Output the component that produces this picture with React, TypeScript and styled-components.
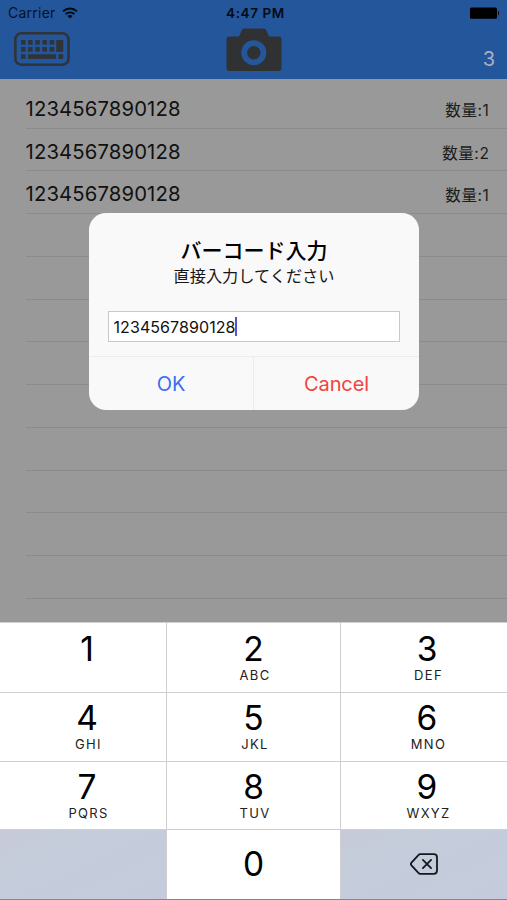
import React from "react";
import styled, { createGlobalStyle } from "styled-components";

const GlobalStyle = createGlobalStyle`
  *, *::before, *::after { box-sizing: border-box; }
  body {
    margin: 0;
    font-family: Inter, "Noto Sans CJK JP", sans-serif;
    color: #000;
  }
  button { font: inherit; border: 0; padding: 0; background: none; }
`;

const Screen = styled.div`
  position: relative;
  width: 507px;
  height: 900px;
  overflow: hidden;
  display: flex;
  flex-direction: column;
  background: #999;
`;

const Header = styled.header`
  flex: none;
  height: 79.4px;
  background: #24569b;
`;

const StatusBar = styled.div`
  display: grid;
  grid-template-columns: 1fr auto 1fr;
  align-items: center;
  height: 26px;
  padding: 0 7px 0 8px;
`;

const Carrier = styled.div`
  display: flex;
  align-items: center;
  gap: 6px;
  font-size: 14px;
  line-height: 20px;
  letter-spacing: 0.25px;
  color: #061226;
`;

const Clock = styled.div`
  font-size: 13.5px;
  font-weight: 600;
  line-height: 20px;
  letter-spacing: 0.6px;
  padding-left: 3px;
  color: #030a14;
`;

const Battery = styled.svg`
  justify-self: end;
`;

const Toolbar = styled.nav`
  display: grid;
  grid-template-columns: 1fr auto 1fr;
  height: 53px;
  padding: 0 12px 0 14px;
`;

const KeyboardButton = styled.button`
  justify-self: start;
  align-self: start;
  display: flex;
  padding-top: 6px;
`;

const CameraButton = styled.button`
  align-self: start;
  display: flex;
  padding-top: 2px;
  margin-left: -2px;
`;

const ItemCount = styled.span`
  justify-self: end;
  padding-top: 19px;
  font-size: 20px;
  line-height: 28px;
  color: #a7b2c4;
`;

const List = styled.ul`
  list-style: none;
  margin: 0;
  padding: 6.5px 0 0 26px;
`;

const Row = styled.li`
  display: flex;
  align-items: center;
  justify-content: space-between;
  height: 42.75px;
  padding-right: 17.5px;
  border-bottom: 1px solid #8b8b8c;
`;

const Code = styled.span`
  font-size: 20.3px;
  line-height: 28px;
  letter-spacing: 0.13px;
  margin-left: -0.5px;
  color: #111;
  padding-top: 4px;
`;

const Quantity = styled.span`
  font-size: 15.5px;
  line-height: 22px;
  letter-spacing: 0.6px;
  color: #1c1c1c;
  padding-top: 8px;
`;

const Dialog = styled.section`
  position: absolute;
  left: 89px;
  top: 213px;
  width: 330px;
  height: 197px;
  border-radius: 17px;
  overflow: hidden;
  display: flex;
  flex-direction: column;
  align-items: center;
  background: #f9f9f9;
`;

const DialogTitle = styled.h1`
  margin: 25px 0 0;
  font-size: 21px;
  font-weight: 500;
  line-height: 26px;
  height: 26px;
`;

const DialogMessage = styled.p`
  margin: 2px 0 0;
  font-size: 16.2px;
  line-height: 20px;
  height: 20px;
  color: #161616;
`;

const Field = styled.div`
  display: flex;
  align-items: center;
  width: 292px;
  height: 31px;
  margin: 25px 0 14px;
  padding-left: 4.5px;
  border: 1px solid #c9c9cb;
  background: #fff;
  font-size: 16px;
  letter-spacing: 0.08px;
  color: #111;
`;

const Caret = styled.span`
  width: 2px;
  height: 19px;
  margin-left: -1px;
  background: #5751d8;
`;

const Actions = styled.div`
  display: grid;
  grid-template-columns: 164px 166px;
  width: 330px;
  flex: 1;
  border-top: 1px solid #ececed;
`;

const Action = styled.button<{ $tone: string }>`
  font-size: 20px;
  letter-spacing: -0.1px;
  color: ${(p) => p.$tone};
  & + & { border-left: 1px solid #ececed; }
`;

const Keypad = styled.div`
  position: absolute;
  left: 0;
  bottom: 0;
  width: 507px;
  display: grid;
  grid-template-columns: 166px 173px 166px;
  grid-template-rows: 69px 68px 67px 69px;
  column-gap: 1px;
  row-gap: 1px;
  padding-top: 1px;
  background: #cfcfd1;
  border-bottom: 1px solid #84868c;
`;

const Key = styled.button<{ $muted?: boolean; $centered?: boolean }>`
  display: flex;
  flex-direction: column;
  align-items: center;
  justify-content: ${(p) => (p.$centered ? "center" : "flex-start")};
  padding-top: ${(p) => (p.$centered ? "0" : "7px")};
  padding-bottom: ${(p) => (p.$centered ? "2px" : "0")};
  background: ${(p) => (p.$muted ? "linear-gradient(155deg, #c7cad8 0%, #c4cddb 35%, #c5cbdc 100%)" : "#fff")};
  &:nth-child(3n + 1) { padding-left: 8px; }
  &:nth-child(3n) { padding-left: 6px; }
  &:nth-child(-n + 3) { padding-top: 8px; }
`;

const DeleteKey = styled(Key)`
  &&:nth-child(3n) { padding-left: 0; }
`;

const Digit = styled.span`
  font-size: 33.5px;
  line-height: 36px;
`;

const Letters = styled.span`
  font-size: 13px;
  line-height: 16px;
  letter-spacing: 1.3px;
  margin-left: 3px;
  color: #222;
`;

function WifiIcon() {
  return (
    <svg width="16" height="12" viewBox="0 0 16 12" fill="none" stroke="#030a14">
      <path d="M1 4.4C5 .6 11 .6 15 4.4" strokeWidth="1.9" />
      <path d="M3.6 7.2c2.5-2.4 6.3-2.4 8.8 0" strokeWidth="1.8" />
      <path d="M8 11.5 5.4 8.9c1.5-1.3 3.7-1.3 5.2 0z" fill="#030a14" stroke="none" />
    </svg>
  );
}

const KEY_CAPS = [7, 14, 21.2, 28.4, 35.6];

function KeyboardIcon() {
  return (
    <svg width="56" height="34" viewBox="0 0 56 34" fill="#303338">
      <rect x="1.3" y="1.3" width="53.2" height="31.4" rx="6" fill="none" stroke="#303338" strokeWidth="2.6" />
      {KEY_CAPS.map((x) => (
        <React.Fragment key={x}>
          <rect x={x} y="8" width="4.6" height="4.6" />
          <rect x={x} y="15" width="4.6" height="4.6" />
        </React.Fragment>
      ))}
      <rect x="42.2" y="8" width="7" height="11.8" />
      <rect x="7" y="22.3" width="4.6" height="4.6" rx="1" />
      <rect x="14" y="22.3" width="28" height="4.6" />
      <rect x="44.4" y="22.3" width="4.8" height="4.6" rx="1" />
    </svg>
  );
}

function CameraIcon() {
  return (
    <svg width="56" height="44" viewBox="0 0 56 44">
      <path
        d="M3 8.5h8.5c1.2 0 1.7-.5 2.2-1.6l1.6-3.8C16 1.3 17 .5 18.7.5h18.6c1.7 0 2.7.8 3.4 2.6l1.6 3.8c.5 1.1 1 1.6 2.2 1.6H53c1.5 0 2.5 1 2.5 2.5v29.2c0 1.8-1 2.8-2.8 2.8H3.3C1.5 43 .5 42 .5 40.2V11c0-1.5 1-2.5 2.5-2.5z"
        fill="#303133"
      />
      <circle cx="27.8" cy="24.7" r="9.6" fill="none" stroke="#24569b" strokeWidth="5.8" />
    </svg>
  );
}

function BackspaceIcon() {
  return (
    <svg width="28" height="22" viewBox="0 0 28 22" fill="none" stroke="#15181c" strokeWidth="1.8" strokeLinejoin="round" strokeLinecap="round">
      <path d="M10.3 1.2H23.8c2.1 0 3.2 1.2 3.2 3.3v13c0 2.1-1.1 3.3-3.2 3.3H10.3c-.8 0-1.4-.3-1.9-.9L1.5 12.4c-.8-.9-.8-1.9 0-2.8l6.9-7.5c.5-.6 1.1-.9 1.9-.9z" />
      <path d="m12.9 6.9 8.2 8.2M21.1 6.9l-8.2 8.2" />
    </svg>
  );
}

const ITEMS = [
  { code: "1234567890128", quantity: 1 },
  { code: "1234567890128", quantity: 2 },
  { code: "1234567890128", quantity: 1 },
];

const EMPTY_ROWS = Array.from({ length: 9 }, (_, i) => i);

const KEYS = [
  ["1", ""],
  ["2", "ABC"],
  ["3", "DEF"],
  ["4", "GHI"],
  ["5", "JKL"],
  ["6", "MNO"],
  ["7", "PQRS"],
  ["8", "TUV"],
  ["9", "WXYZ"],
];

export default function App() {
  return (
    <Screen>
      <GlobalStyle />
      <Header>
        <StatusBar>
          <Carrier>
            Carrier
            <WifiIcon />
          </Carrier>
          <Clock>4:47 PM</Clock>
          <Battery width="30" height="12" viewBox="0 0 30 12">
            <rect x="0" y="0.5" width="27" height="11.3" rx="1.5" />
            <path d="M28 4c1.5.4 1.5 3.8 0 4.2z" />
          </Battery>
        </StatusBar>
        <Toolbar>
          <KeyboardButton aria-label="Keyboard">
            <KeyboardIcon />
          </KeyboardButton>
          <CameraButton aria-label="Camera">
            <CameraIcon />
          </CameraButton>
          <ItemCount>3</ItemCount>
        </Toolbar>
      </Header>

      <List>
        {ITEMS.map((item, i) => (
          <Row key={i}>
            <Code>{item.code}</Code>
            <Quantity>数量:{item.quantity}</Quantity>
          </Row>
        ))}
        {EMPTY_ROWS.map((i) => (
          <Row key={`empty-${i}`} />
        ))}
      </List>

      <Dialog role="dialog">
        <DialogTitle>バーコード入力</DialogTitle>
        <DialogMessage>直接入力してください</DialogMessage>
        <Field>
          1234567890128
          <Caret />
        </Field>
        <Actions>
          <Action $tone="#3b6ff0">OK</Action>
          <Action $tone="#f04440">Cancel</Action>
        </Actions>
      </Dialog>

      <Keypad>
        {KEYS.map(([digit, letters]) => (
          <Key key={digit}>
            <Digit>{digit}</Digit>
            {letters && <Letters>{letters}</Letters>}
          </Key>
        ))}
        <Key $muted aria-label="Blank" />
        <Key $centered>
          <Digit>0</Digit>
        </Key>
        <DeleteKey $muted $centered aria-label="Delete">
          <BackspaceIcon />
        </DeleteKey>
      </Keypad>
    </Screen>
  );
}
